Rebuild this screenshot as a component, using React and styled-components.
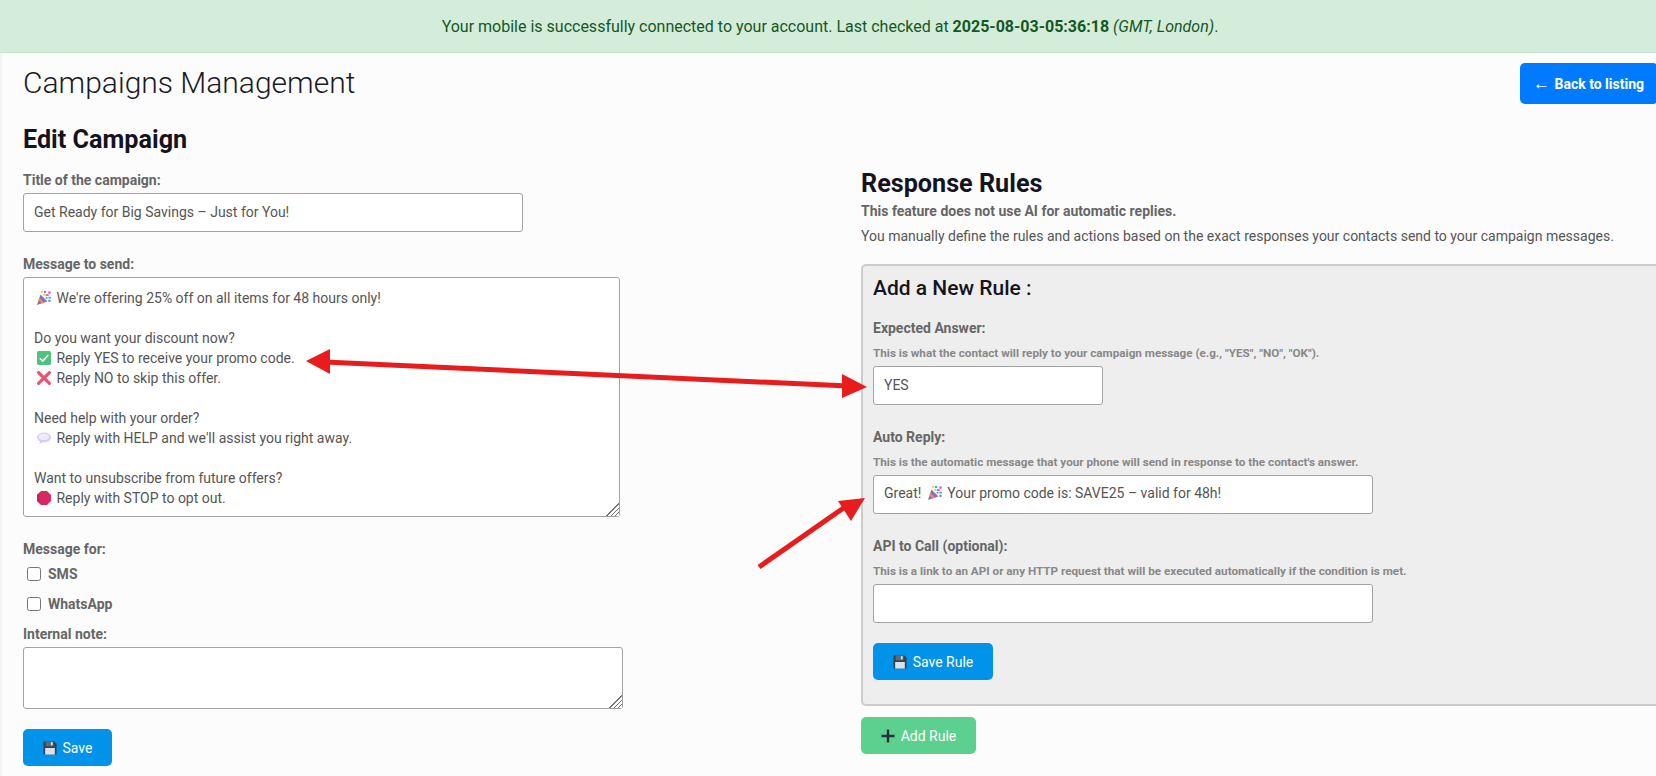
import React from "react";
import styled, { createGlobalStyle } from "styled-components";

const GlobalStyle = createGlobalStyle`
  html, body {
    margin: 0;
    padding: 0;
    background: #fcfcfc;
    font-family: Roboto, "Liberation Sans", sans-serif;
    font-size: 14px;
    color: #555;
  }
  * { box-sizing: border-box; }
`;

const gripCss = `
  &::-webkit-resizer {
    background:
      linear-gradient(135deg, #fff 52%, transparent 52%),
      repeating-linear-gradient(135deg, #777 0, #777 1px, #fff 1px, #fff 3px);
  }
`;

const Page = styled.div`
  position: relative;
  height: 776px;
  overflow: hidden;
  background: linear-gradient(to right, #eeeeee 0, #f8f8f8 2px, #fcfcfc 4px);
`;

const Banner = styled.div`
  height: 53px;
  padding-left: 4px;
  display: flex;
  align-items: center;
  justify-content: center;
  background: #d4edda;
  border-bottom: 1px solid #c3e6cb;
  color: #155724;
  font-size: 16px;
  white-space: pre;
`;

const Main = styled.div`
  padding-left: 23px;
`;

const Header = styled.header`
  display: flex;
  justify-content: space-between;
  align-items: flex-start;
  padding-top: 10px;
`;

const PageTitle = styled.h1`
  margin: 3px 0 0;
  font-size: 30px;
  line-height: 34px;
  font-weight: 300;
  color: #1a1a24;
`;

const BackButton = styled.button`
  width: 138px;
  height: 41px;
  margin-right: -2px;
  padding: 0 0 0 13px;
  border: 0;
  border-radius: 5px;
  background: #007bff;
  color: #fff;
  font: 700 14px Roboto, sans-serif;
  text-align: left;
  white-space: nowrap;
`;

const BackArrow = styled.span`
  font-size: 17px;
  font-weight: 400;
  line-height: 14px;
  margin-right: 1px;
`;

const Columns = styled.div`
  display: grid;
  grid-template-columns: 838px 1fr;
`;

const Heading = styled.h2`
  margin: ${(p) => p.$top || 21}px 0 ${(p) => p.$bottom || 0}px;
  font-size: 25.2px;
  line-height: 30px;
  font-weight: 700;
  color: #14141e;
`;

const Label = styled.label`
  display: block;
  margin-top: ${(p) => p.$top || 0}px;
  line-height: 20px;
  font-weight: 700;
  color: #666;
`;

const inputCss = `
  display: block;
  height: 39px;
  border: 1px solid #a3a3a3;
  border-radius: 3px;
  background: #fff;
  color: #555;
  font: 400 14px Roboto, sans-serif;
`;

const TextInput = styled.input`
  ${inputCss}
  width: ${(p) => p.$width || 500}px;
  margin-top: ${(p) => p.$top || 3}px;
  padding: 0 10px 1px;
`;

const TextBox = styled.div`
  ${inputCss}
  width: ${(p) => p.$width || 500}px;
  margin-top: ${(p) => p.$top || 3}px;
  padding: 0 10px;
  line-height: 35px;
`;

const MessageBox = styled.div`
  width: 597px;
  height: 240px;
  margin-top: 3px;
  padding: 10px 10px 0;
  border: 1px solid #a3a3a3;
  border-radius: 3px;
  background: #fff;
  line-height: 20px;
  resize: both;
  overflow: hidden;
  ${gripCss}
`;

const Line = styled.div`
  height: 20px;
  white-space: pre;
`;

const NoteArea = styled.textarea`
  display: block;
  width: 600px;
  height: 62px;
  margin-top: 3px;
  border: 1px solid #a3a3a3;
  border-radius: 3px;
  background: #fff;
  resize: both;
  ${gripCss}
`;

const CheckRow = styled.label`
  display: flex;
  align-items: center;
  height: 30px;
  padding-left: 4px;
  font-weight: 700;
  color: #666;
`;

const Check = styled.input`
  width: 14px;
  height: 14px;
  margin: 0 7px 0 0;
`;

const ActionButton = styled.button`
  display: flex;
  align-items: center;
  justify-content: center;
  width: ${(p) => p.$width}px;
  height: 37px;
  margin-top: ${(p) => p.$top || 20}px;
  padding: 0;
  border: 0;
  border-radius: 5px;
  background: ${(p) => p.$bg || "#0093e9"};
  color: #fff;
  font: 400 14px Roboto, sans-serif;
  gap: 6px;
`;

const RightColumn = styled.section``;

const Notice = styled.p`
  margin: ${(p) => p.$top}px 0 0;
  line-height: 20px;
  font-weight: ${(p) => (p.$strong ? 700 : 400)};
  color: ${(p) => (p.$strong ? "#666" : "#555")};
`;

const RulePanel = styled.div`
  margin: 18px -12px 0 0;
  padding: 8px 10px 24px;
  border: 2px solid #cccccc;
  border-radius: 5px;
  background: #eeeeee;
`;

const PanelTitle = styled.h3`
  margin: 0;
  font-size: 21px;
  line-height: 28px;
  font-weight: 500;
  color: #14141e;
`;

const HelpText = styled.div`
  margin: 7px 0 0;
  font-size: 11.7px;
  line-height: 16px;
  font-weight: 700;
  color: #888;
`;

const EmojiSvg = styled.svg`
  display: inline-block;
  width: 14px;
  height: 14px;
  margin: 0 ${(p) => p.$right ?? 2}px 0 ${(p) => p.$left ?? 3}px;
  vertical-align: -2px;
`;

const Party = () => (
  <EmojiSvg viewBox="0 0 16 16">
    <path d="M4 4 L12 12 L0 16 Z" fill="#8a6fb8" />
    <path d="M2.6 7.6 L8.4 13.4 L5.4 14.4 L1.6 10.6 Z" fill="#f0913a" />
    <rect x="8" y="0" width="2.4" height="2.4" fill="#2fa8e8" />
    <rect x="13" y="0.5" width="2.6" height="2.6" fill="#f14da0" />
    <rect x="4.8" y="0" width="2" height="2" fill="#f5c33b" />
    <rect x="10" y="3.6" width="3.4" height="2" fill="#f14da0" />
    <rect x="13" y="6.6" width="3" height="2" fill="#35b6e8" />
    <rect x="7.2" y="3.4" width="2" height="2" fill="#f5c33b" />
    <rect x="10" y="6.8" width="2" height="2" fill="#2fa8e8" />
    <rect x="13" y="10" width="2.4" height="2.4" fill="#8a6fb8" />
  </EmojiSvg>
);

const CheckMark = () => (
  <EmojiSvg viewBox="0 0 16 16">
    <rect x="0" y="0" width="16" height="16" rx="2" fill="#4fc27f" />
    <path d="M3.2 8.2 L6.6 11.5 L12.8 4.7" fill="none" stroke="#fff" strokeWidth="1.7" />
  </EmojiSvg>
);

const CrossMark = () => (
  <EmojiSvg viewBox="0 0 16 16">
    <path d="M1.8 1.8 L14.2 14.2 M14.2 1.8 L1.8 14.2" stroke="#f0506e" strokeWidth="3.6" strokeLinecap="round" />
  </EmojiSvg>
);

const Balloon = () => (
  <EmojiSvg viewBox="0 0 16 16">
    <ellipse cx="8" cy="7.4" rx="8" ry="5.6" fill="#d8cdf0" />
    <path d="M3.5 11 L2.8 15 L7.5 12.4 Z" fill="#d8cdf0" />
    <ellipse cx="7.8" cy="6.6" rx="6" ry="3.8" fill="#efeafa" />
  </EmojiSvg>
);

const StopSign = () => (
  <EmojiSvg viewBox="0 0 16 16">
    <path d="M4.6 0 H11.4 L16 4.6 V11.4 L11.4 16 H4.6 L0 11.4 V4.6 Z" fill="#d9285f" />
    <path d="M0 4.6 L3 1.6 V14.4 L0 11.4 Z" fill="#b42a6a" />
  </EmojiSvg>
);

const Floppy = () => (
  <EmojiSvg viewBox="0 0 16 16" $left={0} $right={0}>
    <path d="M.5 .5 H13 L15.5 3 V15.5 H.5 Z" fill="#36424f" />
    <rect x="3" y=".5" width="9" height="5.5" fill="#5c6b7a" />
    <rect x="9" y="1.3" width="2" height="3.7" fill="#d8e3ec" />
    <rect x="2.5" y="8" width="11" height="7.5" fill="#d8e3ec" />
  </EmojiSvg>
);

const Plus = () => (
  <EmojiSvg viewBox="0 0 16 16" $left={0} $right={0}>
    <path d="M8 .5 V15.5 M.5 8 H15.5" stroke="#26303a" strokeWidth="2.8" />
  </EmojiSvg>
);

const Arrows = styled.svg`
  position: absolute;
  left: 0;
  top: 0;
  width: 1656px;
  height: 776px;
  pointer-events: none;
`;

const App = () => {
  return (
    <Page>
      <GlobalStyle />
      <Banner>
        <span>
          Your mobile is successfully connected to your account. Last checked at{" "}
          <b>2025-08-03-05:36:18</b> <i>(GMT, London)</i>.
        </span>
      </Banner>

      <Main>
        <Header>
          <PageTitle>Campaigns Management</PageTitle>
          <BackButton><BackArrow>←</BackArrow> Back to listing</BackButton>
        </Header>

        <Columns>
          <form>
            <Heading $bottom={15}>Edit Campaign</Heading>
            <Label>Title of the campaign:</Label>
            <TextInput readOnly $width={500} value="Get Ready for Big Savings – Just for You!" />

            <Label $top={22}>Message to send:</Label>
            <MessageBox>
              <Line><Party /> We're offering 25% off on all items for 48 hours only!</Line>
              <Line />
              <Line>Do you want your discount now?</Line>
              <Line><CheckMark /> Reply YES to receive your promo code.</Line>
              <Line><CrossMark /> Reply NO to skip this offer.</Line>
              <Line />
              <Line>Need help with your order?</Line>
              <Line><Balloon /> Reply with HELP and we'll assist you right away.</Line>
              <Line />
              <Line>Want to unsubscribe from future offers?</Line>
              <Line><StopSign /> Reply with STOP to opt out.</Line>
            </MessageBox>

            <Label $top={22}>Message for:</Label>
            <CheckRow><Check type="checkbox" />SMS</CheckRow>
            <CheckRow><Check type="checkbox" />WhatsApp</CheckRow>

            <Label $top={5}>Internal note:</Label>
            <NoteArea />

            <ActionButton type="button" $width={89}><Floppy />Save</ActionButton>
          </form>

          <RightColumn>
            <Heading $top={65}>Response Rules</Heading>
            <Notice $top={2} $strong>This feature does not use AI for automatic replies.</Notice>
            <Notice $top={5}>
              You manually define the rules and actions based on the exact responses your contacts send to your campaign messages.
            </Notice>

            <RulePanel>
              <PanelTitle>Add a New Rule :</PanelTitle>

              <Label $top={16}>Expected Answer:</Label>
              <HelpText>This is what the contact will reply to your campaign message (e.g., "YES", "NO", "OK").</HelpText>
              <TextInput readOnly $width={230} $top={5} value="YES" />

              <Label $top={22}>Auto Reply:</Label>
              <HelpText>This is the automatic message that your phone will send in response to the contact's answer.</HelpText>
              <TextBox $top={5}>Great! <Party /> Your promo code is: SAVE25 – valid for 48h!</TextBox>

              <Label $top={22}>API to Call (optional):</Label>
              <HelpText>This is a link to an API or any HTTP request that will be executed automatically if the condition is met.</HelpText>
              <TextInput readOnly $top={5} />

              <ActionButton type="button" $width={120}><Floppy />Save Rule</ActionButton>
            </RulePanel>

            <ActionButton type="button" $width={115} $top={11} $bg="#5cd18f"><Plus />Add Rule</ActionButton>
          </RightColumn>
        </Columns>
      </Main>

      <Arrows viewBox="0 0 1656 776">
        <path d="M325 362 L848 386" stroke="#e81c1c" strokeWidth="5" />
        <path d="M306 361 L330 349 L330 374 Z" fill="#e81c1c" />
        <path d="M867 387 L842 374 L842 398 Z" fill="#e81c1c" />
        <path d="M759 567 L845 507" stroke="#e81c1c" strokeWidth="5" />
        <path d="M865 498 L838 501 L851 521 Z" fill="#e81c1c" />
      </Arrows>
    </Page>
  );
};

export default App;
